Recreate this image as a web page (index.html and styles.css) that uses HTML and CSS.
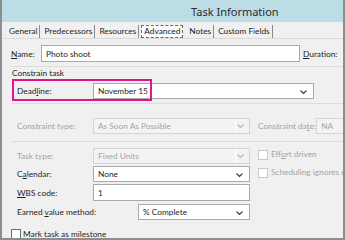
FILE: index.html
```html
<!DOCTYPE html>
<html>
<head>
<meta charset="utf-8">
<link rel="stylesheet" href="styles.css">
</head>
<body>
<div class="window">
  <div class="titlebar"><span class="title">Task Information</span></div>
  <div class="tabs">
    <span class="tab">General</span>
    <span class="tab">Predecessors</span>
    <span class="tab">Resources</span>
    <span class="tab active">Advanced</span>
    <span class="tab">Notes</span>
    <span class="tab">Custom Fields</span>
  </div>
  <div class="content">
    <div class="row name-row">
      <span class="lbl name-lbl"><u>N</u>ame:</span>
      <div class="field name-field">Photo shoot</div>
      <span class="dur-lbl"><u>D</u>uration:</span>
    </div>
    <div class="sep sep-a"></div>
    <div class="group-title">Constrain task</div>
    <div class="row deadline-row">
      <span class="lbl">Dead<u>l</u>ine:</span>
      <div class="field select deadline-field">November 15<svg class="chev" viewBox="0 0 7 4"><polyline points="0.5,0.5 3.5,3.5 6.5,0.5"/></svg></div>
      <div class="highlight"></div>
    </div>
    <div class="sep sep-b"></div>
    <div class="row ct-row">
      <span class="lbl dis">Constraint type:</span>
      <div class="field select disabled std">As Soon As Possible<span class="btn"><svg class="chev" viewBox="0 0 7 4"><polyline points="0.5,0.5 3.5,3.5 6.5,0.5"/></svg></span></div>
      <span class="dis cd-lbl">Constraint da<u>t</u>e:</span>
      <div class="field disabled na-field">NA</div>
    </div>
    <div class="sep sep-c"></div>
    <div class="row tt-row">
      <span class="lbl dis">Task type:</span>
      <div class="field select disabled std">Fixed Units<span class="btn"><svg class="chev" viewBox="0 0 7 4"><polyline points="0.5,0.5 3.5,3.5 6.5,0.5"/></svg></span></div>
      <span class="cb cb-dis"></span><span class="dis cb-text">Eff<u>o</u>rt driven</span>
    </div>
    <div class="row cal-row">
      <span class="lbl">C<u>a</u>lendar:</span>
      <div class="field select std">None<svg class="chev" viewBox="0 0 7 4"><polyline points="0.5,0.5 3.5,3.5 6.5,0.5"/></svg></div>
      <span class="cb cb-dis"></span><span class="dis cb-text">Scheduling ignores resource calendars</span>
    </div>
    <div class="row wbs-row">
      <span class="lbl"><u>W</u>BS code:</span>
      <div class="field std">1</div>
    </div>
    <div class="row evm-row">
      <span class="lbl evm-lbl">Earned <u>v</u>alue method:</span>
      <div class="field select evm-field">% Complete<svg class="chev" viewBox="0 0 7 4"><polyline points="0.5,0.5 3.5,3.5 6.5,0.5"/></svg></div>
    </div>
    <div class="row ms-row">
      <span class="cb cb-ms"></span><span class="ms-text"><u>M</u>ark task as milestone</span>
    </div>
  </div>
</div>
</body>
</html>
```

FILE: styles.css
```css
* { box-sizing: border-box; }
html, body { margin: 0; padding: 0; }
body {
  width: 345px;
  height: 240px;
  overflow: hidden;
  background: #f0f0f0;
  font-family: Lato, "Noto Sans", sans-serif;
  font-size: 8.3px;
  color: #1e1e1e;
}
u { text-decoration: underline; text-underline-offset: 1px; }
.window {
  height: 240px;
  border-left: 2px solid #8d8d8d;
  border-right: 2px solid #8d8d8d;
  border-bottom: 2px solid #8d8d8d;
  background: #f0f0f0;
  display: flex;
  flex-direction: column;
  overflow: hidden;
}
.titlebar {
  height: 22px;
  flex: none;
  background: #bcdde6;
  display: flex;
  align-items: center;
  padding-left: 189px;
  font-family: "Noto Sans", sans-serif;
  font-size: 11px;
  color: #2b2b2b;
}
.tabs {
  margin-top: 3px;
  height: 14px;
  flex: none;
  display: flex;
  padding-left: 3px;
  border-bottom: 1px solid #d9d9d9;
}
.tab {
  padding: 0 2px;
  line-height: 13px;
  border-right: 1px solid #8a8a8a;
  margin-right: 2px;
  height: 13px;
  white-space: nowrap;
}
.tab:first-child { border-left: 1px solid #e6e6e6; padding-left: 3px; }
.tab.active {
  background: #fbfbfb;
  outline: 1px dashed #6a6a6a;
  outline-offset: -1px;
  border-right: none;
  padding: 0 3px;
  margin-right: 4px;
}
.content {
  flex: 1;
  display: flex;
  flex-direction: column;
  padding-left: 9px;
}
.row {
  display: flex;
  align-items: center;
  flex: none;
  white-space: nowrap;
  position: relative;
}
.lbl { width: 82px; flex: none; padding-left: 6px; }
.dis { color: #a3a3a3; }
.field {
  height: 16px;
  background: #fff;
  border: 1px solid #a9a9a9;
  display: flex;
  align-items: center;
  padding-left: 4px;
  flex: none;
  position: relative;
}
.field.disabled {
  background: #f3f3f3;
  border-color: #d4d4d4;
  color: #a3a3a3;
}
.chev {
  position: absolute;
  right: 6px;
  top: 6px;
  width: 7px;
  height: 4px;
  fill: none;
  stroke: #3a3a3a;
  stroke-width: 1.1;
}
.btn {
  position: absolute;
  right: 0;
  top: 0;
  bottom: 0;
  width: 14px;
  border-left: 1px solid #ffffff;
}
.disabled .chev { stroke: #b5b5b5; right: 5px; top: 5px; }
.name-row { margin-top: 6px; }
.name-lbl { width: 30px; padding-left: 0; }
.name-field { width: 259px; height: 17px; }
.dur-lbl { margin-left: 3px; }
.sep { height: 1px; background: #dcdcdc; flex: none; }
.sep-a { margin-top: 4px; }
.group-title { height: 10px; line-height: 10px; margin-top: 1px; padding-left: 1px; flex: none; }
.deadline-row { margin-top: 5px; }
.deadline-field { width: 221px; }
.highlight {
  position: absolute;
  left: 1px;
  top: -4px;
  width: 140px;
  height: 22px;
  border: 2px solid #e3158a;
}
.sep-b { margin-top: 4px; }
.ct-row { margin-top: 14px; }
.std { width: 157px; }
.cd-lbl { margin-left: 8px; width: 64px; }
.na-field { width: 40px; }
.sep-c { margin-top: 7px; }
.tt-row { margin-top: 6px; }
.cal-row { margin-top: 2px; }
.wbs-row { margin-top: 2px; }
.wbs-row .field { height: 17px; }
.evm-row { margin-top: 3px; }
.evm-lbl { width: 127px; }
.evm-field { width: 112px; }
.cb {
  width: 10px;
  height: 10px;
  background: #fff;
  border: 1px solid #6e6e6e;
  flex: none;
}
.cb-dis { border-color: #c9c9c9; margin-left: 8px; align-self: flex-start; margin-top: 2px; }
.cb-text { margin-left: 3px; align-self: flex-start; line-height: 12px; }
.ms-row { margin-top: 9px; padding-left: 0; }
.ms-text { margin-left: 2px; }
```
